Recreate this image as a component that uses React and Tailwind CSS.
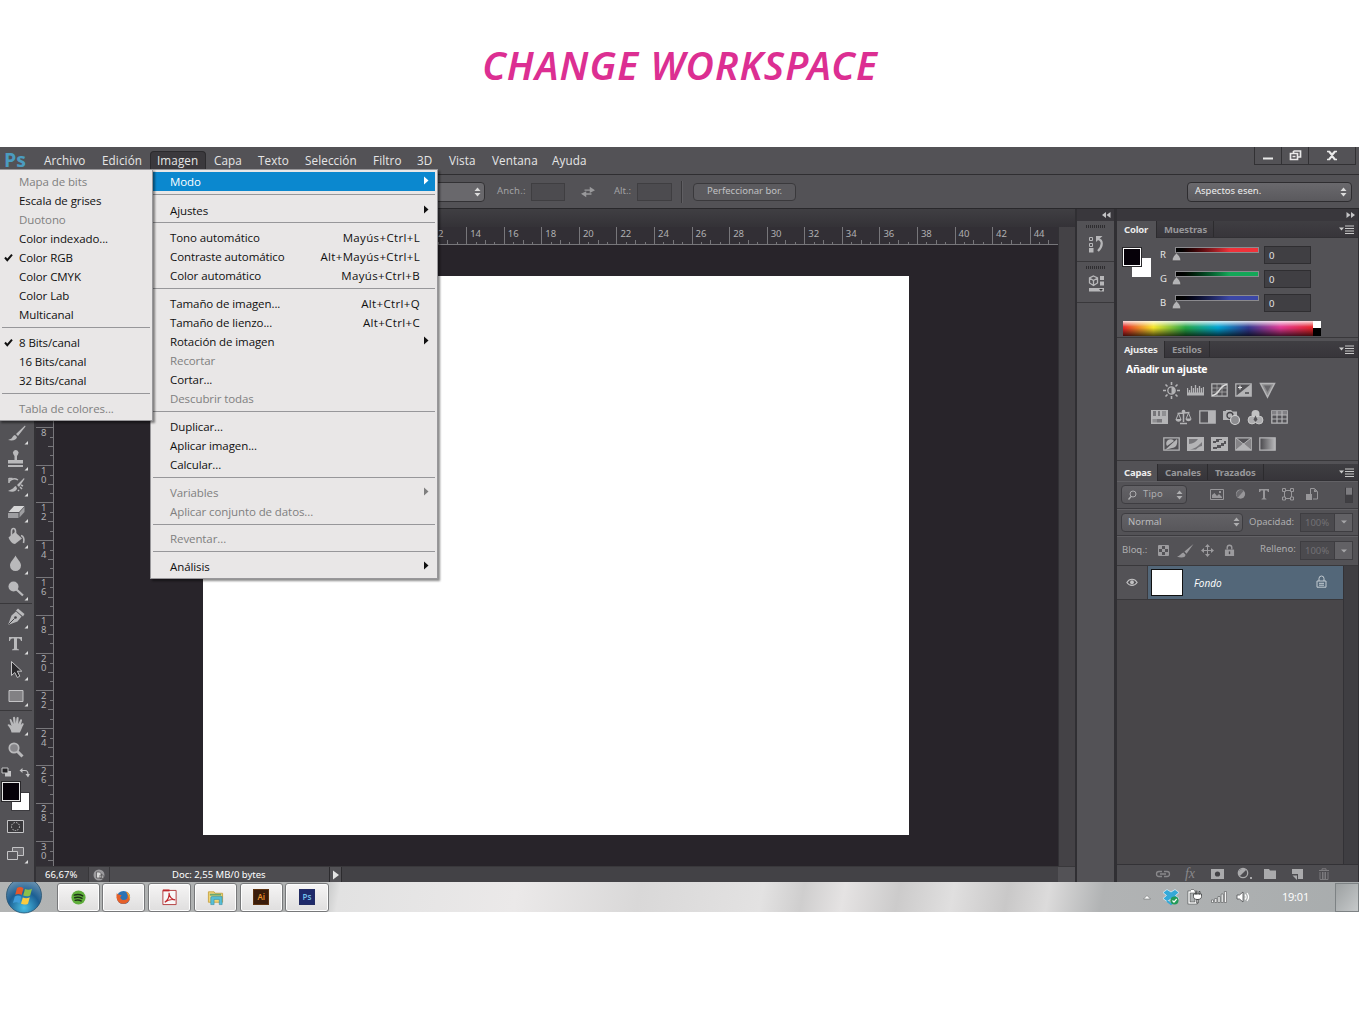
import React from "react";

/* ---------- shared pieces ---------- */

function Icon({ w = 18, h = 18, box, children, className = "" }) {
  return (
    <svg
      width={w}
      height={h}
      viewBox={box || `0 0 ${w} ${h}`}
      fill="none"
      className={`shrink-0 ${className}`}
    >
      {children}
    </svg>
  );
}

const UpDown = ({ className = "text-[#dcdcdc]" }) => (
  <Icon w={7} h={10} className={className}>
    <path d="M3.5 0.5 6.5 4H.5zM.5 6h6l-3 3.5z" fill="currentColor" />
  </Icon>
);

const PanelMenu = () => (
  <Icon w={15} h={9} className="text-[#c9c9c9]">
    <path d="M0 2.5h5L2.5 5.5z" fill="currentColor" />
    <path d="M6 1h9M6 3.5h9M6 6h9M6 8.5h9" stroke="currentColor" />
  </Icon>
);

/* ---------- menu bar ---------- */

const MENUS = [
  ["Archivo", "w-[58px]"],
  ["Edición", "w-[48px]"],
  ["Imagen", "w-[56px] pl-[6px] bg-[#3b393d] border border-b-0 border-[#2c2b2e] rounded-t-sm leading-[17px]"],
  ["Capa", "w-[44px] ml-[8px]"],
  ["Texto", "w-[47px]"],
  ["Selección", "w-[68px]"],
  ["Filtro", "w-[44px]"],
  ["3D", "w-[32px]"],
  ["Vista", "w-[43px]"],
  ["Ventana", "w-[60px]"],
  ["Ayuda", "w-[60px]"],
];

function MenuBar() {
  return (
    <div className="flex h-[27px] shrink-0 bg-[#535256]">
      <div className="w-[44px] pl-[4px] font-['Open_Sans'] text-[19.5px] leading-[25px] font-bold text-[#4b9cc0]">Ps</div>
      <div className="flex pt-1 font-['Open_Sans'] text-[11.700px] leading-[19px] tracking-[0.100px] text-[#e6e6e6]">
        {MENUS.map(([label, cls]) => (
          <div key={label} className={`h-[18px] whitespace-nowrap ${cls}`}>
            {label}
          </div>
        ))}
      </div>
      <div className="mr-[3px] ml-auto flex h-[18px] border border-t-0 border-[#323134] text-[#e9e9e9]">
        <div className="flex w-[27px] justify-center border-r border-[#323134]">
          <Icon w={12} h={17}><path d="M1 11.5h10" stroke="currentColor" strokeWidth="2" /></Icon>
        </div>
        <div className="flex w-[27px] justify-center border-r border-[#323134]">
          <Icon w={13} h={17}>
            <path d="M4.5 4h7v6h-3M4.5 4v2M1.5 6.500h7v6h-7z M3.500 9.500h3" stroke="currentColor" strokeWidth="1.700" />
          </Icon>
        </div>
        <div className="flex w-[46px] justify-center">
          <Icon w={12} h={17}>
            <path d="M1 4.500h2.500L6 7.200l2.500-2.700H11M1 12.500h2.500L6 9.300l2.500 3.200H11M3 5l6 7M9 5l-6 7" stroke="currentColor" strokeWidth="1.500" />
          </Icon>
        </div>
      </div>
    </div>
  );
}

/* ---------- options bar ---------- */

function OptionsBar() {
  return (
    <div className="flex h-[35px] shrink-0 items-center border-t border-b border-t-[#2f2e31] border-b-[#29282b] bg-[#535256] font-['Noto_Sans'] text-[9.5px] text-[#a2a2a5]">
      <div className="flex h-5 w-[485px] items-center justify-end rounded-sm border border-[#333235] bg-[#69686c] pr-[3px]">
        <UpDown />
      </div>
      <span className="ml-[12px] w-[34px] tracking-[0.200px]">Anch.:</span>
      <div className="h-[18px] w-[34px] border border-[#3f3e41] bg-[#4c4b4f]" />
      <Icon w={14} h={12} box="0 0 16 12" className="ml-4 text-[#99999b]">
        <path d="M4 3h6V0l6 4-6 3V4.500H4zM12 9H6v3L0 8l6-3v2.500h6z" fill="currentColor" />
      </Icon>
      <span className="ml-[19px] w-[23px]">Alt.:</span>
      <div className="h-[18px] w-[35px] border border-[#3f3e41] bg-[#4c4b4f]" />
      <div className="ml-[9px] h-[22px] w-0.5 border-l border-[#39383b] bg-[#5f5e62]" />
      <div className="ml-[10px] flex h-[18px] w-[103px] items-center justify-center rounded-sm border border-[#3a393c] bg-[#5b5a5e] text-[#c0c0c2]">
        Perfeccionar bor.
      </div>
      <div className="mr-[7px] ml-auto flex h-5 w-[165px] items-center justify-between rounded-sm border border-[#2e2d30] bg-linear-to-b from-[#6a696d] to-[#5a595d] pr-1 pl-[7px] text-[#eeeeee]">
        Aspectos esen.
        <UpDown />
      </div>
    </div>
  );
}

/* ---------- toolbox ---------- */

function Tool({ children, corner = true }) {
  return (
    <div className="flex h-[26px] shrink-0 items-center pl-[7px] text-[#b9b9bb]">
      <Icon w={22} h={24} box="0 0 22 24">
        {children}
        {corner && <path d="M21 19v3.500h-3.500z" fill="#dedede" />}
      </Icon>
    </div>
  );
}

function Toolbox() {
  return (
    <div className="flex w-9 shrink-0 flex-col border-r-2 border-[#333236] bg-[#535256] pt-[212px]">
      <Tool>
        <path d="M18 3.500 9 12l2 2L18.500 4.500zM8 13c-2 .5-2.500 2-3.500 3.500L1 18c5 1 8.500 0 9-3z" fill="currentColor" />
      </Tool>
      <Tool>
        <path d="M6.500 6.500a2.800 2.800 0 1 1 4.500 0L10 8v4h6v3.500H1V12h6.500V8zM1 17h15v2H1z" fill="currentColor" />
      </Tool>
      <Tool>
        <path d="M17 4l-7 7 2 2 5.500-8zM9 12c-2 .5-2 2-4 3l-4 2c5 1.500 8.500.5 9-2.500z" fill="currentColor" />
        <path d="M2 9V4m0 3.500C5 4 8 4 11 6M2 4.500h3.500M14 11l2 1m-3 1 2 2m-4 1 1 1" stroke="currentColor" strokeWidth="1.500" />
      </Tool>
      <Tool>
        <path d="M7 6h10.500L12 12H1.500z" fill="#d6d6d7" />
        <path d="M1 13h10.500v5H1zM12.500 12.500l5-5.500v5l-5 5.500z" fill="#9d9da0" />
      </Tool>
      <Tool>
        <path d="M1.500 11.500 8 6l7 6.500-7 5.500c-3 0-5-3-6.500-6.500z" fill="currentColor" />
        <path d="M4.500 10V5.500c0-4 4-4 4 0V10M14 9.500c3 1 3.500 3.500 2.500 7.500" stroke="currentColor" strokeWidth="1.600" />
      </Tool>
      <Tool>
        <path d="M8.500 3.500c2 4 5.500 6.500 5.500 10a5.500 5.500 0 0 1-11 0c0-3.500 3.500-6 5.500-10z" fill="currentColor" />
      </Tool>
      <Tool>
        <circle cx="6.500" cy="8.500" r="5" fill="currentColor" />
        <path d="M9.500 11.500l6.500 6" stroke="currentColor" strokeWidth="2.300" />
      </Tool>
      <div className="mb-px h-px w-8 shrink-0 bg-[#39383b]" />
      <Tool>
        <path d="M9 5.500l5.500 5-4 5L1 19l3.500-9.500z" fill="currentColor" />
        <path d="M1.500 18.500l6-6" stroke="#444347" />
        <circle cx="8.500" cy="11.500" r="1.300" fill="#444347" />
        <path d="M11 2.500l6.500 5.500-1.500 2.500-7-6z" fill="currentColor" />
      </Tool>
      <Tool>
        <path d="M2 5h13v4h-1c-.5-2-1-2.500-4-2.500V16c0 1 .5 1.200 2 1.400v.8H5v-.8c1.500-.2 2-.4 2-1.400V6.500c-3 0-3.500.5-4 2.500H2z" fill="currentColor" />
      </Tool>
      <Tool>
        <path d="M4.500 3.500v14l3.300-3 2.500 5 2.500-1.300-2.500-5h4.500z" fill="#29282b" stroke="#c4c4c6" />
      </Tool>
      <Tool>
        <path d="M2 6.500h14v11H2z" fill="#828184" stroke="#c4c4c6" />
      </Tool>
      <div className="my-px h-px w-8 shrink-0 bg-[#39383b]" />
      <Tool>
        <path d="M4.500 19.500C4 16 2 14 .5 12c1-1.500 2.500-.5 4 1L2.500 6.500c.8-1 1.800-.5 2.200.8L6.500 11 6 4.500c.8-1.200 2-.8 2.200.4l.6 5.600.8-6c1-1 2-.6 2 .6L11.300 11l2-4.500c1-.8 1.900 0 1.700 1L13.800 12l1.400-1.700c1.200-.4 1.800.4 1.300 1.400-1.500 2.300-2 5.300-3.700 7.800z" fill="currentColor" />
      </Tool>
      <Tool corner={false}>
        <circle cx="7" cy="9" r="4.700" fill="#87868a" stroke="currentColor" strokeWidth="1.700" />
        <path d="M10.500 12.500l5 5" stroke="currentColor" strokeWidth="3" />
      </Tool>
      <div className="flex h-4 shrink-0 items-center gap-[7px] pl-px text-[#c4c4c6]">
        <Icon w={11} h={10}>
          <path d="M4 4h6v5.500H4z" fill="currentColor" />
          <path d="M1 1h6v5H1z" fill="#252427" stroke="currentColor" />
        </Icon>
        <Icon w={11} h={11}>
          <path d="M3 3.500h3c2.500 0 3 1 3 4" stroke="currentColor" strokeWidth="1.200" />
          <path d="M3.500 1v5L.5 3.500zM6.500 7H11l-2 3.500z" fill="currentColor" />
        </Icon>
      </div>
      <div className="ml-px grid h-[31px] w-[30px] shrink-0">
        <div className="col-start-1 row-start-1 mt-3 ml-2.5 h-[19px] w-[19px] border border-[#3c3b3f] bg-white" />
        <div className="col-start-1 row-start-1 mt-0.5 ml-px h-[19px] w-[18px] border border-[#e6e6e6] bg-[#060109] outline outline-[#29282b]" />
      </div>
      <Icon w={17} h={13} className="mt-[9px] ml-[7px] text-[#c4c4c6]">
        <path d="M.5.500h16v12H.5z" stroke="currentColor" fill="#39383b" />
        <circle cx="8.500" cy="6.500" r="4" stroke="currentColor" strokeDasharray="1.500 1.200" />
      </Icon>
      <Icon w={22} h={20} className="mt-3 ml-[7px] text-[#c4c4c6]">
        <path d="M5.500 2.500h11v8h-11z" fill="#6c6b6f" stroke="currentColor" />
        <path d="M.5 6.500h10v8H.5z" fill="#59585c" stroke="currentColor" />
        <path d="M21 15v3.500h-3.500z" fill="#dedede" />
      </Icon>
    </div>
  );
}

/* ---------- document ---------- */

/* Marks that lie under the open menus carry no number. */
const H_MARKS = Array.from({ length: 27 }, (_, i) => (i < 10 ? "" : i * 2 - 8));
const V_MARKS = Array.from({ length: 17 }, (_, i) => (i < 5 ? "" : String(i * 2 - 2)));

function HorizontalRuler() {
  return (
    <div className="flex h-[18px] shrink-0 overflow-hidden border-b border-[#77767a] bg-[#322f35] pl-[17px] font-['Noto_Sans'] text-[9.500px] leading-[13px] text-[#b0b0b2]">
      {H_MARKS.map((n, i) => (
        <div key={i} className="flex h-[18px] w-[37.570px] shrink-0 flex-col justify-between border-l border-[#77767a] pl-[3px]">
          <span className="h-[13px]">{n}</span>
          <div className="-mt-1 -ml-[4px] flex h-[5px] shrink-0 items-end">
            <i className="w-1/4" />
            <i className="h-[3px] w-1/4 border-l border-[#77767a]" />
            <i className="h-[5px] w-1/4 border-l border-[#77767a]" />
            <i className="h-[3px] w-1/4 border-l border-[#77767a]" />
          </div>
        </div>
      ))}
    </div>
  );
}

function VerticalRuler() {
  return (
    <div className="w-[18px] shrink-0 overflow-hidden border-r border-[#77767a] bg-[#322f35] font-['Noto_Sans'] text-[9.500px] leading-[9px] text-[#b0b0b2]">
      <div className="-mt-[6px]">
        {V_MARKS.map((n, i) => (
          <div key={i} className="flex h-[37.600px] justify-between border-t border-[#77767a]">
            <div className="flex flex-col pl-[5px]">
              {n.split("").map((d, k) => (
                <span key={k}>{d}</span>
              ))}
            </div>
            <div className="flex w-[5px] flex-col items-end">
              <i className="h-1/4" />
              <i className="h-1/4 w-[3px] border-t border-[#77767a]" />
              <i className="h-1/4 w-[5px] border-t border-[#77767a]" />
              <i className="h-1/4 w-[3px] border-t border-[#77767a]" />
            </div>
          </div>
        ))}
      </div>
    </div>
  );
}

function DocumentArea() {
  return (
    <div className="flex min-w-0 flex-1 flex-col bg-[#28242a]">
      <div className="h-[18px] shrink-0 bg-linear-to-b from-[#403f43] to-[#343237]" />
      <div className="flex min-h-0 flex-1">
        <div className="flex w-[1022px] shrink-0 flex-col overflow-hidden">
          <HorizontalRuler />
          <div className="flex min-h-0 flex-1">
            <VerticalRuler />
            <div className="min-w-0 flex-1 pt-[31px] pl-[149px]">
              <div className="h-[559px] w-[706px] bg-white" />
            </div>
          </div>
        </div>
        <div className="flex-1 border-l border-[#323135] bg-[#444246]" />
      </div>
      <div className="flex h-4 shrink-0 items-center border-t border-[#39383b] bg-[#434246] font-['Noto_Sans'] text-[9.500px] text-white">
        <div className="h-full w-[53px] border-r border-[#38373a] pl-[9px] leading-[15px] tracking-[0.050px]">66,67%</div>
        <div className="flex h-full w-[21px] items-center justify-center border-r border-[#38373a] bg-[#4f4e52]">
          <Icon w={12} h={12}>
            <circle cx="6" cy="6" r="5.500" fill="#9c9b9e" />
            <path d="M3.500 3h3l2 2v4h-5zM7 6h3v3.500H7z" fill="#d9d9d9" stroke="#4a494c" strokeWidth=".7" />
          </Icon>
        </div>
        <div className="h-full w-[219px] bg-[#4d4c50] pl-[62px] leading-[15px]">Doc: 2,55 MB/0 bytes</div>
        <div className="flex h-full w-[13px] items-center justify-center border-x border-[#2c2b2e] bg-[#535256]">
          <Icon w={8} h={10}><path d="M1 .500v9L7 5z" fill="#e5e5e5" /></Icon>
        </div>
        <div className="ml-auto h-full w-[17px] bg-[#535256]" />
      </div>
    </div>
  );
}

/* ---------- collapsed dock ---------- */

const Grip = () => (
  <div className="flex h-[5px] w-5 gap-px">
    {Array.from({ length: 10 }, (_, i) => (
      <i key={i} className="h-[3px] w-px bg-[#2e2d30]" />
    ))}
  </div>
);

function Dock() {
  return (
    <div className="flex w-[42px] shrink-0 flex-col border-r-[3px] border-l-2 border-[#302f33] bg-[#535256]">
      <div className="flex h-3 shrink-0 items-center justify-end bg-[#39373c] pr-[3px]">
        <Icon w={9} h={6}><path d="M4 0v6L0 3zM8.500 0v6l-4-3z" fill="#c4c4c6" /></Icon>
      </div>
      <div className="flex h-[41px] flex-col items-center border-b border-[#39383b] pt-1">
        <Grip />
        <Icon w={16} h={20} className="mt-1 text-[#b7b7b9]">
          <path d="M1.500 3.500h3v3h-3zM1.500 9.500h3v3h-3z" stroke="currentColor" />
          <path d="M1 14h4.500v4.500H1z" fill="currentColor" />
          <path d="M10 5c5 1 5 7 0 12" stroke="currentColor" strokeWidth="2.200" />
          <path d="M8 8V2h6.500z" fill="currentColor" />
        </Icon>
      </div>
      <div className="flex h-[41px] flex-col items-center border-b border-[#39383b] pt-1">
        <Grip />
        <Icon w={16} h={18} className="mt-1 text-[#b7b7b9]">
          <path d="M5.500 1l4 2v5l-4 2.500L1.500 8V3z M1.500 3l4 2.500L9.500 3M5.500 5.500v5" stroke="currentColor" strokeWidth="1.300" />
          <path d="M12 1h4v4h-4zM12 6.500h4v4h-4zM1 13h15v3.500H1z" fill="currentColor" />
          <path d="M11 14h4l-2 2z" fill="#333" />
        </Icon>
      </div>
    </div>
  );
}

/* ---------- panels ---------- */

function Tabs({ tabs }) {
  return (
    <div className="flex h-[17px] shrink-0 border-b border-[#313034] bg-linear-to-b from-[#3f3e42] to-[#37353a] font-['Noto_Sans'] text-[9.500px] leading-[17px] font-bold">
      {tabs.map(([label, w], i) => (
        <div
          key={label}
          className={`shrink-0 whitespace-nowrap border-r border-[#2c2b2e] pl-[7px] ${w} ${i === 0 ? "h-[17px] bg-[#535256] tracking-[-0.200px] text-[#ececec]" : "text-[#97979a] tracking-[-0.150px]"}`}
        >
          {label}
        </div>
      ))}
      <div className="mr-[4px] ml-auto flex items-center"><PanelMenu /></div>
    </div>
  );
}

function ColorPanel() {
  const rows = [
    ["R", "to-[#f0323a]"],
    ["G", "to-[#14a758]"],
    ["B", "to-[#3b47a5]"],
  ];
  return (
    <div className="flex h-[117px] shrink-0 flex-col border-b border-[#39383b]">
      <Tabs tabs={[["Color", "w-[40px]"], ["Muestras", "w-[57px]"]]} />
      <div className="flex h-[82px] shrink-0 pt-[8px]">
        <div className="ml-1.5 grid h-8 w-[30px]">
          <div className="col-start-1 row-start-1 mt-[12px] ml-[9px] size-[19px] bg-white" />
          <div className="col-start-1 row-start-1 mt-[2px] size-[18px] border border-white bg-[#060109] outline outline-[#29282b]" />
        </div>
        <div className="flex flex-1 flex-col pl-[7px]">
          {rows.map(([name, color]) => (
            <div key={name} className="flex h-6 font-['Noto_Sans'] text-[9.500px] leading-[17px] text-[#e6e6e6]">
              <span className="w-[13px]">{name}</span>
              <div className="w-[86px] pt-px">
                <div className={`ml-0.5 h-1.5 w-[84px] border border-[#8b8a8e] bg-linear-to-r from-black ${color} to-65%`} />
                <Icon w={11} h={10} box="0 0 10 9" className="-mt-px -ml-[2px]">
                  <path d="M5 .800c2 1.700 4 4 4 7.200H1C1 4.800 3 2.500 5 .800z" fill="#b4b4b6" stroke="#4a494c" strokeWidth=".7" />
                </Icon>
              </div>
              <div className="ml-[5px] h-[18px] w-[47px] border border-[#2f2e31] bg-[#403f43] pl-1 leading-[17px]">0</div>
            </div>
          ))}
        </div>
      </div>
      <div className="mt-[1px] ml-[6px] flex h-[15px] w-[198px]">
        <div className="flex-1 bg-[linear-gradient(to_bottom,rgba(255,255,255,0.85),rgba(255,255,255,0)_40%,rgba(0,0,0,0)_45%,rgba(0,0,0,0.7)),linear-gradient(to_right,#e52527,#f6e52a_16%,#25a546_33%,#00a3d2_50%,#33388f_66%,#e03893_83%,#e52527)]" />
        <div className="w-2 border-t-7 border-white bg-black" />
      </div>
    </div>
  );
}

const FR = <path d="M.8 1.800h15.400v12.400H.8z" stroke="currentColor" strokeWidth="1.300" />;

const ADJUST_ROWS = [
  [
    <>
      <circle cx="8.500" cy="8.500" r="3.700" stroke="currentColor" strokeWidth="1.300" />
      <path d="M8.500 5v7a3.500 3.500 0 0 0 0-7z" fill="currentColor" />
      <path d="M8.500 0v3M8.500 14v3M0 8.500h3M14 8.500h3M2.500 2.500l2 2M12.500 12.500l2 2M2.500 14.500l2-2M12.500 4.500l2-2" stroke="currentColor" strokeWidth="1.600" />
    </>,
    <>
      <path d="M0 10.500h18v3H0z" fill="currentColor" />
      <path d="M.5 12V6M2.500 12V8M4.500 12V4M6.500 12V6M8.500 12V3M10.500 12V6M12.500 12V4M14.500 12V6M16.500 12V5" stroke="currentColor" strokeWidth="1.300" />
    </>,
    <>
      {FR}
      <path d="M6 2v12M11 2v12M1 6h15M1 10h15" stroke="currentColor" strokeWidth=".7" />
      <path d="M1 13.500C9 13 8 3 16 2.500" stroke="#dcdcdc" strokeWidth="1.500" />
    </>,
    <>
      {FR}
      <path d="M16 2v12H1z" fill="currentColor" />
      <path d="M3 5.500h4M5 3.500v4" stroke="#e2e2e2" strokeWidth="1.200" />
      <path d="M10 11h4" stroke="#434246" strokeWidth="1.400" />
    </>,
    <>
      <path d="M1.500 1.500h14L8.500 15z" fill="#8c8c8e" stroke="currentColor" strokeWidth="1.500" />
      <path d="M5 3.500h7L8.500 10z" fill="#68676b" />
    </>,
  ],
  [
    <>
      <path d="M0 1h17v14H0z" fill="currentColor" />
      <path d="M2 2h3v5H2zM7 2h2v5H7z" fill="#77767a" />
      <path d="M11 2h4v5h-4zM1.500 10H6v3.500H1.500z" fill="#8f8f92" />
      <path d="M6 10h5v3.500H6z" fill="#77767a" />
    </>,
    <>
      <path d="M8.500 1v12M2.500 4.500l12-1M5 14.500h7" stroke="currentColor" strokeWidth="1.500" />
      <path d="M3.500 4.500L1 10.500h5zM13.500 4L11 10h5z" stroke="currentColor" />
      <path d="M.5 10.500h6c-1 3-5 3-6 0zM10.500 10h6c-1 3-5 3-6 0z" fill="currentColor" />
      <circle cx="8.500" cy="2.500" r="1.800" fill="currentColor" />
    </>,
    <>
      {FR}
      <path d="M9 2h7v12H9z" fill="currentColor" />
    </>,
    <>
      <path d="M0 2h3V1h5l1.500 1.500H14V11H0z" fill="currentColor" />
      <circle cx="7" cy="6.500" r="3" stroke="#434246" strokeWidth="1.300" />
      <circle cx="12" cy="11" r="4.500" fill="#8c8c8f" stroke="#d2d2d3" strokeWidth="1.200" />
    </>,
    <>
      <circle cx="8.500" cy="5" r="4" fill="#c2c2c3" />
      <circle cx="5" cy="11" r="4" fill="#adadaf" stroke="#d8d8d8" strokeWidth=".7" />
      <circle cx="12" cy="11" r="4" fill="#adadaf" stroke="#d8d8d8" strokeWidth=".7" />
      <path d="M8.500 6.500l2 4-2 2.500-2-2.500z" fill="#535256" />
    </>,
    <>
      {FR}
      <path d="M1 2h15v4H1z" fill="#828185" />
      <path d="M6 2v12M11 2v12M1 6h15M1 10h15" stroke="currentColor" strokeWidth="1.200" />
    </>,
  ],
  [
    <>
      {FR}
      <path d="M2 14L14 3c1 5-1 9-5 9z" fill="currentColor" />
      <path d="M4 10a4 4 0 0 1 7-5z" fill="currentColor" />
    </>,
    <>
      <path d="M0 1h17v14H0z" fill="currentColor" />
      <path d="M2 3h9C9 6 6 7.500 2 8zM15 6v4c-3 .5-5 2-6 3.500H3C9 12.500 12 9 15 6z" fill="#77767a" />
    </>,
    <>
      <path d="M0 1h17v14H0z" fill="currentColor" />
      <path d="M2 7V5h3V3h6v1H8v2H5v1zM2 13v-2h4V9h4V7h3V5h2v3h-2v2h-3v2H6v1z" fill="#535256" />
    </>,
    <>
      {FR}
      <path d="M1 2l7.500 6L1 14zM16 2L8.500 8l7.500 6z" fill="#848386" />
      <path d="M1 14l7.500-7L16 14z" fill="currentColor" />
      <path d="M1 2l15 12M16 2L1 14" stroke="currentColor" />
    </>,
    <>
      <defs>
        <linearGradient id="ramp">
          <stop stopColor="#48474b" />
          <stop offset="1" stopColor="#b9b9bb" />
        </linearGradient>
      </defs>
      <path d="M.8 1.800h15.400v12.400H.8z" fill="url(#ramp)" stroke="currentColor" strokeWidth="1.300" />
    </>,
  ],
];

function AdjustPanel() {
  return (
    <div className="flex h-[120px] shrink-0 flex-col border-b border-[#39383b]">
      <Tabs tabs={[["Ajustes", "w-[48px]"], ["Estilos", "w-[45px]"]]} />
      <div className="h-[19px] pt-[3px] pl-[9px] font-['Open_Sans'] text-[10.500px] leading-[16px] font-bold tracking-[-0.350px] text-white">Añadir un ajuste</div>
      <div className="flex w-[204px] flex-col items-center text-[#b4b4b6]">
        {ADJUST_ROWS.map((row, r) => (
          <div key={r} className="flex h-[27px] items-center gap-[7px]">
            {row.map((glyph, i) => (
              <Icon key={i} w={17} h={17}>{glyph}</Icon>
            ))}
          </div>
        ))}
      </div>
    </div>
  );
}

function Percent() {
  return (
    <div className="flex h-[19px] w-[53px] border border-[#3e3d41]">
      <div className="w-[34px] border-r border-[#3e3d41] bg-[#4b4a4e] pl-[4px] leading-[17px] text-[#727175]">100%</div>
      <div className="flex flex-1 items-center justify-center bg-[#626165]">
        <Icon w={6} h={4}><path d="M0 .500h6L3 3.500z" fill="#a5a5a8" /></Icon>
      </div>
    </div>
  );
}

const LockGlyph = () => (
  <>
    <path d="M3.500 6V3.800a2.500 2.500 0 0 1 5 0V6" stroke="currentColor" strokeWidth="1.500" />
    <path d="M1 6h10v7H1z" fill="currentColor" />
    <path d="M6 8v3" stroke="#4a494d" strokeWidth="1.500" />
  </>
);

const ROW = "flex shrink-0 items-center border-b border-[#3c3b3f] shadow-[inset_0_1px_0_#626165]";
const SELECT = "flex items-center rounded-sm border border-[#3e3d41] bg-linear-to-b from-[#636266] to-[#58575b]";

function LayersPanel() {
  return (
    <div className="flex min-h-0 flex-1 flex-col font-['Noto_Sans'] text-[9.500px] text-[#aeaeb0]">
      <Tabs tabs={[["Capas", "w-[41px]"], ["Canales", "w-[50px]"], ["Trazados", "w-[56px]"]]} />
      <div className={`${ROW} h-[28px] pl-1`}>
        <div className={`${SELECT} h-[19px] w-[66px] pr-[3px] pl-[5px]`}>
          <Icon w={11} h={10} className="text-[#aeaeb0]">
            <circle cx="6" cy="4" r="3" stroke="currentColor" />
            <path d="M4 6.500L1.500 9.500" stroke="currentColor" strokeWidth="1.400" />
          </Icon>
          <span className="ml-[5px] flex-1 tracking-[0.100px]">Tipo</span>
          <UpDown className="text-[#aeaeb0]" />
        </div>
        <div className="ml-[23px] flex items-center gap-[10px] text-[#98979a]">
          <Icon w={14} h={13}>
            <path d="M.5 1.500h13v10H.5z" stroke="currentColor" />
            <path d="M2 10V7l2.500-2L7 8l2-2 3 3v1zM9 3h2v2H9z" fill="currentColor" />
          </Icon>
          <Icon w={13} h={13} box="0 0 14 13">
            <circle cx="7" cy="6" r="5" fill="currentColor" />
            <path d="M4 10A5 5 0 0 1 10.500 2.500z" fill="#6b6a6e" />
          </Icon>
          <Icon w={14} h={13}><path d="M2 1h10v3h-1L10 2.500H8V10l1.500 1v.5h-5V11L6 10V2.500H4L3 4H2z" fill="currentColor" /></Icon>
          <Icon w={14} h={13}>
            <path d="M3.500 2.500h7v8h-7z" stroke="currentColor" />
            <path d="M1.500 .500h3v3h-3zM9.500 .500h3v3h-3zM1.500 9h3v3h-3zM9.500 9h3v3h-3z" fill="#535256" stroke="currentColor" />
          </Icon>
          <Icon w={14} h={13}>
            <path d="M5.500 8V.500h4l3 3V11H8" stroke="currentColor" />
            <path d="M9 1v3h3.500zM1 6h6v6H1z" fill="currentColor" />
          </Icon>
        </div>
        <div className="mr-[5px] ml-auto h-[16px] w-2 border border-[#3e3d41] border-t-[#59585c] bg-linear-to-b from-[#7d7c80] from-45% to-[#403f43] to-50%" />
      </div>
      <div className={`${ROW} h-[27px] pl-1`}>
        <div className={`${SELECT} h-[19px] w-[122px] pr-[2px] pl-[6px]`}>
          <span className="flex-1 text-[#bcbcbe]">Normal</span>
          <UpDown className="text-[#aeaeb0]" />
        </div>
        <span className="w-[57px] pl-[6px]">Opacidad:</span>
        <Percent />
      </div>
      <div className={`${ROW} h-[30px] border-b-[#39383b] pl-[5px]`}>
        <span className="w-[35px]">Bloq.:</span>
        <div className="flex w-[103px] items-center gap-[9px] text-[#9c9b9e]">
          <Icon w={13} h={13}>
            <path d="M1.500 1.500h10v10h-10z" stroke="currentColor" />
            <path d="M2 2h3v3H2zM8 2h3v3H8zM5 5h3v3H5zM2 8h3v3H2zM8 8h3v3H8z" fill="currentColor" />
          </Icon>
          <Icon w={17} h={14} box="0 0 16 13" className="-ml-[2px]">
            <path d="M15.500 0L7 7l2 2zM6 8c-2 .5-3 3-6 4 4 1 8 1 8-2z" fill="currentColor" />
          </Icon>
          <Icon w={13} h={13} className="-ml-[2px]">
            <path d="M6.500 1v11M1 6.500h11" stroke="currentColor" />
            <path d="M6.500 0L9 3H4zM6.500 13L4 10h5zM0 6.500L3 4v5zM13 6.500L10 9V4z" fill="currentColor" />
          </Icon>
          <Icon w={11} h={13} box="0 0 12 14" className="ml-[1px]"><LockGlyph /></Icon>
        </div>
        <span className="w-[40px] pb-0.5">Relleno:</span>
        <Percent />
      </div>
      <div className="flex min-h-0 flex-1">
        <div className="flex flex-1 flex-col bg-[#484649]">
          <div className="flex h-[34px] border-b border-[#38373a] bg-[#536779]">
            <div className="flex w-[31px] items-center justify-center border-r border-[#3c3b3f] bg-[#535256]">
              <Icon w={12} h={9} box="0 0 14 10" className="text-[#c2c2c3]">
                <path d="M1 5c3-5 9-5 12 0-3 4.500-9 4.500-12 0z" stroke="currentColor" strokeWidth="1.300" />
                <circle cx="7" cy="4.700" r="2.200" fill="currentColor" />
              </Icon>
            </div>
            <div className="mt-[3px] ml-[3px] h-[27px] w-[32px] border border-[#111] bg-white" />
            <span className="ml-[11px] font-['Open_Sans'] text-[10px] leading-[34px] text-white italic">Fondo</span>
            <Icon w={11} h={13} className="mt-[9px] mr-[16px] ml-auto text-[#c4ccd2]">
              <path d="M3 6V3.500a2.500 2.500 0 0 1 5 0V6M1 6h9v6.200H1zM3 8.300h5M3 10.200h5" stroke="currentColor" />
            </Icon>
          </div>
        </div>
        <div className="w-[15px] border-l border-[#333236] bg-[#3f3e42]" />
      </div>
      <div className="flex h-[18px] shrink-0 items-center gap-[11px] border-t border-[#333236] bg-[#4d4c50] pl-[38px] text-[#aaaaac]">
        <Icon w={16} h={12} className="text-[#89888b]">
          <path d="M7 3.500H4a2.500 2.500 0 0 0 0 5h3M9 3.500h3a2.500 2.500 0 0 1 0 5H9M5 6h6" stroke="currentColor" strokeWidth="1.300" />
        </Icon>
        <span className="w-4 text-center font-['Liberation_Serif'] text-[14px] leading-3 text-[#89888b] italic">fx</span>
        <Icon w={16} h={12}>
          <path d="M2 1h13v10H2z" fill="currentColor" />
          <circle cx="8.500" cy="6" r="2.600" fill="#434246" />
        </Icon>
        <Icon w={16} h={13}>
          <circle cx="7" cy="6" r="4.700" stroke="currentColor" strokeWidth="1.300" />
          <path d="M3.700 9.300A4.700 4.700 0 0 1 10.300 2.700zM14 10h2v2h-2z" fill="currentColor" />
        </Icon>
        <Icon w={16} h={12}><path d="M1 1h5l1 1.500h6V11H1z" fill="currentColor" /></Icon>
        <Icon w={16} h={12}>
          <path d="M2 1h11v10H8V6H2z" fill="currentColor" />
          <path d="M2.500 7.500H7V12z" fill="currentColor" />
        </Icon>
        <Icon w={14} h={12} className="text-[#7c7b7e]">
          <path d="M2 2.500h10M5 2V.800h4V2M3 4v7.500h8V4M5.500 4v7M7 4v7M8.500 4v7" stroke="currentColor" />
        </Icon>
      </div>
    </div>
  );
}

function PanelColumn() {
  return (
    <div className="flex w-[242px] shrink-0 flex-col gap-[3px] border-r border-[#302f33] bg-[#535256]">
      <div className="-mb-[3px] flex h-3 shrink-0 items-center justify-end bg-[#39373c] pr-[3px]">
        <Icon w={9} h={6}><path d="M.5 0v6l4-3zM5 0v6l4-3z" fill="#c4c4c6" /></Icon>
      </div>
      <ColorPanel />
      <AdjustPanel />
      <LayersPanel />
    </div>
  );
}

/* ---------- drop-down menus ---------- */

const IMAGE_MENU = [
  { t: "Modo", sub: true, active: true },
  { sep: "h-[10px] pt-[3px]" },
  { t: "Ajustes", sub: true },
  { sep: "h-[8px] pt-[2px]" },
  { t: "Tono automático", k: "Mayús+Ctrl+L" },
  { t: "Contraste automático", k: "Alt+Mayús+Ctrl+L" },
  { t: "Color automático", k: "Mayús+Ctrl+B" },
  { sep: "h-[9px] pt-[3px]" },
  { t: "Tamaño de imagen...", k: "Alt+Ctrl+Q" },
  { t: "Tamaño de lienzo...", k: "Alt+Ctrl+C" },
  { t: "Rotación de imagen", sub: true },
  { t: "Recortar", off: true },
  { t: "Cortar..." },
  { t: "Descubrir todas", off: true },
  { sep: "h-[9px] pt-[3px]" },
  { t: "Duplicar..." },
  { t: "Aplicar imagen..." },
  { t: "Calcular..." },
  { sep: "h-[9px] pt-[3px]" },
  { t: "Variables", sub: true, off: true },
  { t: "Aplicar conjunto de datos...", off: true },
  { sep: "h-[8px] pt-[3px]" },
  { t: "Reventar...", off: true },
  { sep: "h-[9px] pt-[3px]" },
  { t: "Análisis", sub: true },
];

const MODE_MENU = [
  { t: "Mapa de bits", off: true },
  { t: "Escala de grises" },
  { t: "Duotono", off: true },
  { t: "Color indexado..." },
  { t: "Color RGB", check: true },
  { t: "Color CMYK" },
  { t: "Color Lab" },
  { t: "Multicanal" },
  { sep: "h-[9px] pt-[3px]" },
  { t: "8 Bits/canal", check: true },
  { t: "16 Bits/canal" },
  { t: "32 Bits/canal" },
  { sep: "h-[9px] pt-[3px]" },
  { t: "Tabla de colores...", off: true },
];

function DropMenu({ items, className, inset }) {
  return (
    <div className={`absolute border border-[#98979a] bg-[#e9e7e7] pt-0.5 font-['Open_Sans'] text-[11.500px] leading-[19px] shadow-[2px_2px_2px_rgba(0,0,0,0.45)] ${className}`}>
      {items.map((it, i) =>
        it.sep ? (
          <div key={i} className={`px-0.5 ${it.sep}`}>
            <div className="h-px bg-[#97979a]" />
          </div>
        ) : (
          <div
            key={i}
            className={`mx-0.5 flex h-[19px] items-center whitespace-nowrap ${it.active ? "bg-[#0b88cf] text-white" : it.off ? "text-[#7f7f7f]" : "text-[#101010]"}`}
          >
            <span className={`flex justify-center ${inset}`}>
              {it.check && (
                <Icon w={9} h={9} className="-ml-[5px]"><path d="M1 4.500l2.300 2.700L8 1.700" stroke="#111" strokeWidth="2" /></Icon>
              )}
            </span>
            <span className="flex-1 tracking-[-0.090px]">{it.t}</span>
            {it.k && <span className="pr-[15px] tracking-[0.350px]">{it.k}</span>}
            {it.sub && (
              <Icon w={5} h={9} className="mr-[6px] mb-[3px]"><path d="M0 .500v8l4.500-4z" fill="currentColor" /></Icon>
            )}
          </div>
        )
      )}
    </div>
  );
}

/* ---------- taskbar ---------- */

const TASKS = [
  <>
    <circle cx="9" cy="9" r="7.500" fill="#5fae3b" />
    <path d="M4.500 6.500c3-1 6.500-.7 9 .8M5 9.300c2.700-.8 5.500-.5 7.700.7M5.500 12c2-.6 4.500-.4 6.300.6" stroke="#1d3317" strokeWidth="1.500" strokeLinecap="round" />
  </>,
  <>
    <circle cx="9" cy="9" r="7" fill="#2a73b5" />
    <path d="M2 4c0 2 2 2 5 2.500L5.500 9c1 3 5 3.500 7 1.500 1.500-2 1-5-1-7.500 4 1.500 5 5 4 8-2 5-8 6-11.500 3C1.500 11.500 1 8 2 4z" fill="#e5602a" />
    <path d="M12 3c4 2 4.500 6 3 9 0-4-1-6-3-9z" fill="#f5b833" />
  </>,
  <>
    <path d="M2 1.500h14v15H2z" fill="#f8f8f8" stroke="#b33a3c" />
    <path d="M2 1.500h7" stroke="#c0282d" strokeWidth="2" />
    <path d="M4 14c3-2 5-6 4.500-10 0 4 3 7.500 6.500 7.500-4-1-8 0-11 2.500z" stroke="#c0282d" strokeWidth="1.200" />
  </>,
  <>
    <path d="M1.500 3h6l1 1.500h8V14h-15z" fill="#f1d678" stroke="#c9a545" />
    <path d="M3 6h12" stroke="#6aa870" strokeWidth="2" />
    <path d="M4 16.500V9.500c0-1 .5-1.500 1.500-1.500H16v8.500h-3V11H7.500v5.500z" fill="#56bfd6" stroke="#2c8ba5" strokeWidth=".6" />
  </>,
];

function AdobeTile({ label, cls }) {
  return (
    <div className={`flex size-4 items-center justify-center border font-['Open_Sans'] text-[8px] leading-none font-semibold ${cls}`}>
      {label}
    </div>
  );
}

function Taskbar() {
  return (
    <div className="flex h-[30px] w-[1359px] shrink-0 items-center bg-[linear-gradient(100deg,#b2b4b4_0%,#aeb0b0_23%,#e2e2e2_25%,#ebe9e9_38%,#d9d8d8_47%,#e3e2e2_56%,#cfcece_59%,#e5e3e3_62%,#cccbcb_66%,#e0dfdf_70%,#c9c8c8_74%,#dcdbdb_77%,#b1b3b4_81%,#a8acad_100%)]">
      <div className="flex w-[56.500px] pl-[5px]">
        <Icon w={38} h={38} className="-mt-[5px] -mb-[3px]">
          <defs>
            <radialGradient id="orb" cx=".5" cy=".85" r=".9">
              <stop stopColor="#49bfe4" />
              <stop offset=".5" stopColor="#1c5f93" />
              <stop offset="1" stopColor="#7fa0b8" />
            </radialGradient>
          </defs>
          <circle cx="19" cy="18.500" r="17.500" fill="url(#orb)" stroke="#22506f" strokeWidth=".8" />
          <path d="M12 11c2.500-1.500 4.500-1 6.500.2L16.700 18c-2-1.200-4-1.500-6.500-.2z" fill="#e4572b" />
          <path d="M20 12c2.500 1 4.500 1 7-.3L25.200 18.500c-2.500 1.200-4.500 1-7 0z" fill="#8cc04a" />
          <path d="M9.800 19.500c2.500-1.500 4.500-1 6.500.2l-1.800 6.500c-2-1.200-4-1.500-6.500-.2z" fill="#3f9bd8" />
          <path d="M17.800 20.500c2.500 1 4.500 1 7-.3L23 26.700c-2.500 1.200-4.500 1-7 0z" fill="#fbcb3f" />
        </Icon>
      </div>
      <div className="flex gap-[2.700px]">
        {[...TASKS, "Ai", "Ps"].map((t, i) => (
          <div
            key={i}
            className="flex h-[29px] w-[43.100px] items-center justify-center rounded-[3px] border border-[#77787a] bg-linear-to-b from-[#f6f5f5] to-[#dfdede] shadow-[inset_0_0_0_1px_#fdfdfd]"
          >
            {t === "Ai" ? (
              <AdobeTile label="Ai" cls="border-[#5d3210] bg-[#3a1c0b] text-[#f0962e]" />
            ) : t === "Ps" ? (
              <AdobeTile label="Ps" cls="border-[#232c63] bg-[#1f2a6b] text-[#78c4ee]" />
            ) : (
              <Icon w={17} h={17} box="0 0 18 18">{t}</Icon>
            )}
          </div>
        ))}
      </div>
      <div className="ml-auto flex h-full items-center">
        <Icon w={8} h={5}><path d="M4 .500l3.500 3.500h-7z" fill="#fff" stroke="#6c6e70" strokeWidth=".6" /></Icon>
        <Icon w={18} h={18} className="ml-[11px]">
          <path d="M5 1.500l4 2.500 4-2.500 4 3-3.500 3 3.500 3-4 3-4-2.500-4 2.500-4-3 3.500-3L1 4.500z" fill="#35a9d8" stroke="#e9f6fb" strokeWidth=".7" />
          <path d="M5 13l4 3 4-3" stroke="#35a9d8" strokeWidth="2" />
          <circle cx="12.500" cy="12.500" r="4" fill="#239a58" />
          <path d="M10.500 12.500l1.500 1.700 2.700-3.200" stroke="#fff" strokeWidth="1.200" />
        </Icon>
        <Icon w={16} h={16} className="ml-[7px]">
          <path d="M2 3h7v11H2zM4 1.500h3" stroke="#3b3c3e" strokeWidth="2.600" />
          <path d="M2 3h7v11H2zM4 1.500h3" stroke="#fff" strokeWidth="1.500" />
          <path d="M6.500 5h8v2.500c0 2-1.500 3-4 3s-4-1-4-3zM8.500 5V2.500h1V5zM12 5V2.500h1V5zM9.800 10.500h1.400v3.500H9.800z" fill="#fff" stroke="#3b3c3e" strokeWidth=".8" />
        </Icon>
        <Icon w={16} h={14} className="ml-[8px]">
          <path d="M.5 10h2v2.500h-2zM3.800 8.500h2v4h-2zM7 6.500h2v6H7zM10.200 4h2v8.500h-2zM13.400 1.500h2v11h-2z" fill="#fff" stroke="#4f5153" strokeWidth=".6" />
        </Icon>
        <Icon w={14} h={14} className="ml-[9px]">
          <path d="M1 5h2.500L7 2v10L3.500 9H1z" fill="#fff" stroke="#4f5153" strokeWidth=".8" />
          <path d="M9 4.500c1.300 1.500 1.300 3.500 0 5M11 3c2 2.500 2 5.500 0 8" stroke="#fff" strokeWidth="1.200" />
        </Icon>
        <span className="ml-[32px] font-['Open_Sans'] text-[11px] tracking-[-0.200px] text-white">19:01</span>
        <div className="ml-[26px] h-[29px] w-[24px] border border-[#7d8284] bg-linear-to-br from-[#9da1a2] to-[#c6c9ca]" />
      </div>
    </div>
  );
}

/* ---------- page ---------- */

export default function App() {
  return (
    <div className="flex h-[1020px] w-[1360px] flex-col overflow-hidden bg-white">
      <h1 className="h-[147px] shrink-0 pt-[38px] text-center font-['Noto_Sans'] text-[39px] leading-[54px] font-semibold tracking-[1.100px] text-[#dc2f92] italic">
        CHANGE WORKSPACE
      </h1>
      <div className="relative flex h-[735px] w-[1359px] shrink-0 flex-col">
        <MenuBar />
        <OptionsBar />
        <div className="flex min-h-0 flex-1">
          <Toolbox />
          <DocumentArea />
          <Dock />
          <PanelColumn />
        </div>
        <DropMenu items={IMAGE_MENU} inset="w-[17px]" className="top-[22px] left-[150px] h-[410px] w-[288px]" />
        <DropMenu items={MODE_MENU} inset="w-[17px]" className="top-[22px] -left-px h-[252px] w-[154px]" />
      </div>
      <Taskbar />
    </div>
  );
}
